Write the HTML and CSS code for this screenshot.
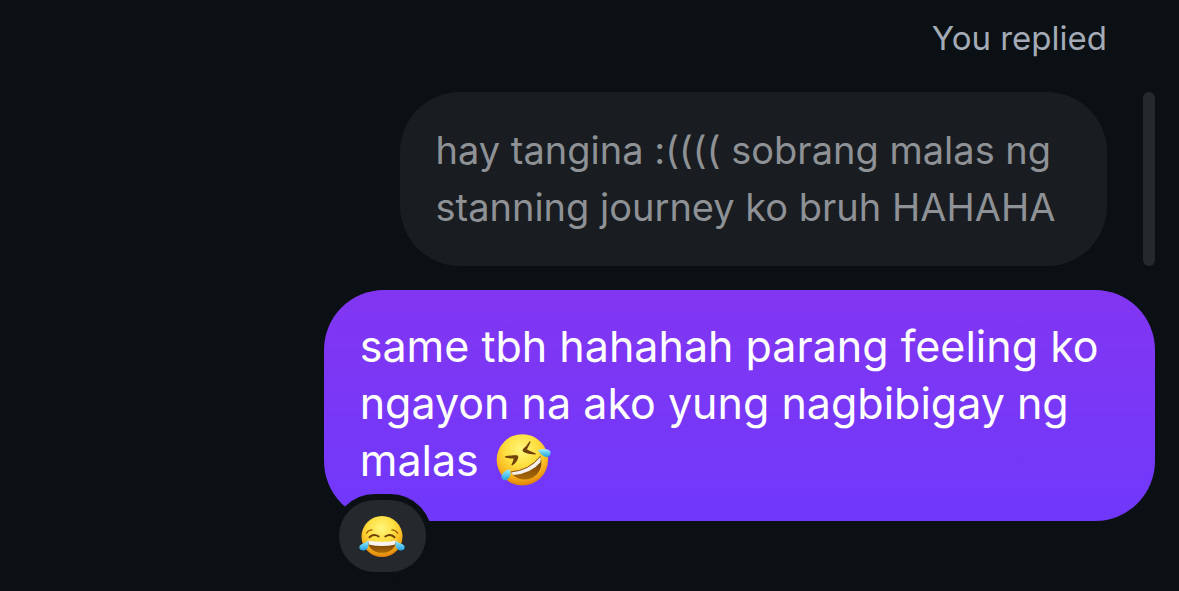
FILE: index.html
```html
<!DOCTYPE html>
<html lang="tl">
<head>
    <meta charset="UTF-8">
    <meta name="viewport" content="width=device-width, initial-scale=1.0">
    <title>Chat</title>
    <link rel="stylesheet" href="styles.css">
</head>
<body>
    <main class="chat">
        <p class="reply-label">You replied</p>

        <div class="quote">
            <p class="bubble bubble-quote">hay tangina :(((( sobrang malas ng stanning journey ko bruh HAHAHA</p>
            <div class="quote-bar"></div>
        </div>

        <div class="message">
            <p class="bubble bubble-sent">same tbh hahahah parang feeling ko ngayon na ako yung nagbibigay ng malas
                <svg class="emoji" viewBox="46 24 170 160" role="img" aria-label="rolling on the floor laughing">
                    <defs>
                        <radialGradient id="face" cx="0.48" cy="0.3" r="0.7">
                            <stop offset="0" stop-color="#fff67e"/>
                            <stop offset="0.45" stop-color="#ffdf40"/>
                            <stop offset="0.75" stop-color="#fbb822"/>
                            <stop offset="1" stop-color="#e08005"/>
                        </radialGradient>
                        <linearGradient id="mouth" x1="0" y1="0" x2="0" y2="1">
                            <stop offset="0" stop-color="#6c3604"/>
                            <stop offset="1" stop-color="#a86a08"/>
                        </linearGradient>
                        <linearGradient id="tear" x1="0" y1="0" x2="0" y2="1">
                            <stop offset="0" stop-color="#a5ebfb"/>
                            <stop offset="0.5" stop-color="#5ccaf0"/>
                            <stop offset="1" stop-color="#259ede"/>
                        </linearGradient>
                    </defs>
                    <circle cx="126" cy="105" r="78" fill="url(#face)"/>
                    <path d="M149 51Q142 66 137 74Q149 82 165 87Q144 87 130 79Q127 76 130 73Q139 66 149 51Z" fill="#70400a" stroke="#70400a" stroke-width="4" stroke-linejoin="round"/>
                    <path d="M75 96Q94 92 109 93Q113 95 111 99Q108 111 95 120Q101 109 102 99Q91 100 75 96Z" fill="#70400a" stroke="#70400a" stroke-width="4" stroke-linejoin="round"/>
                    <path d="M91 142Q147 137 181 94Q190 125 172 147Q146 173 112 161Q98 155 91 142Z" fill="url(#mouth)"/>
                    <path d="M92 142Q147 137 181 95Q183 103 181 112Q154 145 99 151Q94 147 92 142Z" fill="#f4f0ed"/>
                    <path d="M91 142Q147 137 181 94" fill="none" stroke="#8b4d08" stroke-width="3"/>
                    <path d="M173 77Q182 71 198 73C209 74 214 81 211 88C208 97 198 98 191 94Q181 88 173 77Z" fill="url(#tear)"/>
                    <path d="M88 134Q76 134 67 146C59 157 63 165 72 167C81 168 87 160 89 151Q91 142 88 134Z" fill="url(#tear)"/>
                </svg>
            </p>
            <button class="reaction" type="button" aria-label="Laughing reaction">
                <svg class="reaction-emoji" viewBox="119 102 138 130" aria-hidden="true">
                    <circle cx="188" cy="167" r="62" fill="url(#face)"/>
                    <path d="M141 157Q147 147 158 147M218 147Q229 147 235 157" fill="none" stroke="#a85e08" stroke-width="4" stroke-linecap="round"/>
                    <path d="M150 169Q163 157 178 167M198 167Q213 157 226 169" fill="none" stroke="#70400a" stroke-width="6" stroke-linecap="round"/>
                    <path d="M145 181Q188 188 231 181C229 228 147 228 145 181Z" fill="url(#mouth)"/>
                    <path d="M146 179Q188 187 230 179Q230 187 226 192Q188 200 150 192Q146 187 146 179Z" fill="#f7f3ef"/>
                    <path d="M146 179Q150 196 143 204C136 211 126 211 121 205C117 198 121 192 129 189Q139 186 146 179Z" fill="url(#tear)"/>
                    <path d="M230 179Q226 196 233 204C240 211 250 211 255 205C259 198 255 192 247 189Q237 186 230 179Z" fill="url(#tear)"/>
                </svg>
            </button>
        </div>
    </main>
</body>
</html>
```
FILE: styles.css
```css
* {
    box-sizing: border-box;
}
body {
    margin: 0;
    background-color: #0b1014;
    color: white;
    font-family: Inter, sans-serif;
}
p {
    margin: 0;
}
.chat {
    display: flex;
    flex-direction: column;
    align-items: flex-end;
    min-height: 100vh;
    padding: 14px 24px;
}
.reply-label {
    margin-right: 48px;
    margin-bottom: 30px;
    color: #a4abb6;
    font-size: 33px;
    line-height: 48px;
}
.quote {
    display: flex;
    gap: 36px;
    width: 66.8%;
    margin-bottom: 24px;
}
.bubble {
    padding: 30px 36px;
    border-radius: 60px;
    line-height: 57px;
}
.bubble-quote {
    flex: 1;
    background-color: #191c20;
    color: #8e9195;
    font-size: 38px;
}
.quote-bar {
    width: 12px;
    border-radius: 6px;
    background-color: #25282c;
}
.message {
    position: relative;
    width: 73.5%;
    margin-bottom: 56px;
}
.bubble-sent {
    padding-top: 28px;
    padding-bottom: 32px;
    background: linear-gradient(#8236f1, #7038fb);
    font-size: 43px;
}
.emoji {
    width: 56px;
    height: 53px;
    margin-left: 5px;
    vertical-align: -10px;
}
/* overlaps the lower left corner of the bubble */
.reaction {
    position: absolute;
    left: 9px;
    bottom: -57px;
    display: flex;
    align-items: center;
    justify-content: center;
    width: 99px;
    height: 84px;
    padding: 0;
    border: 6px solid #0b1014;
    border-radius: 42px;
    background-color: #25282c;
    cursor: pointer;
}
.reaction-emoji {
    width: 46px;
    height: 43px;
}
```
